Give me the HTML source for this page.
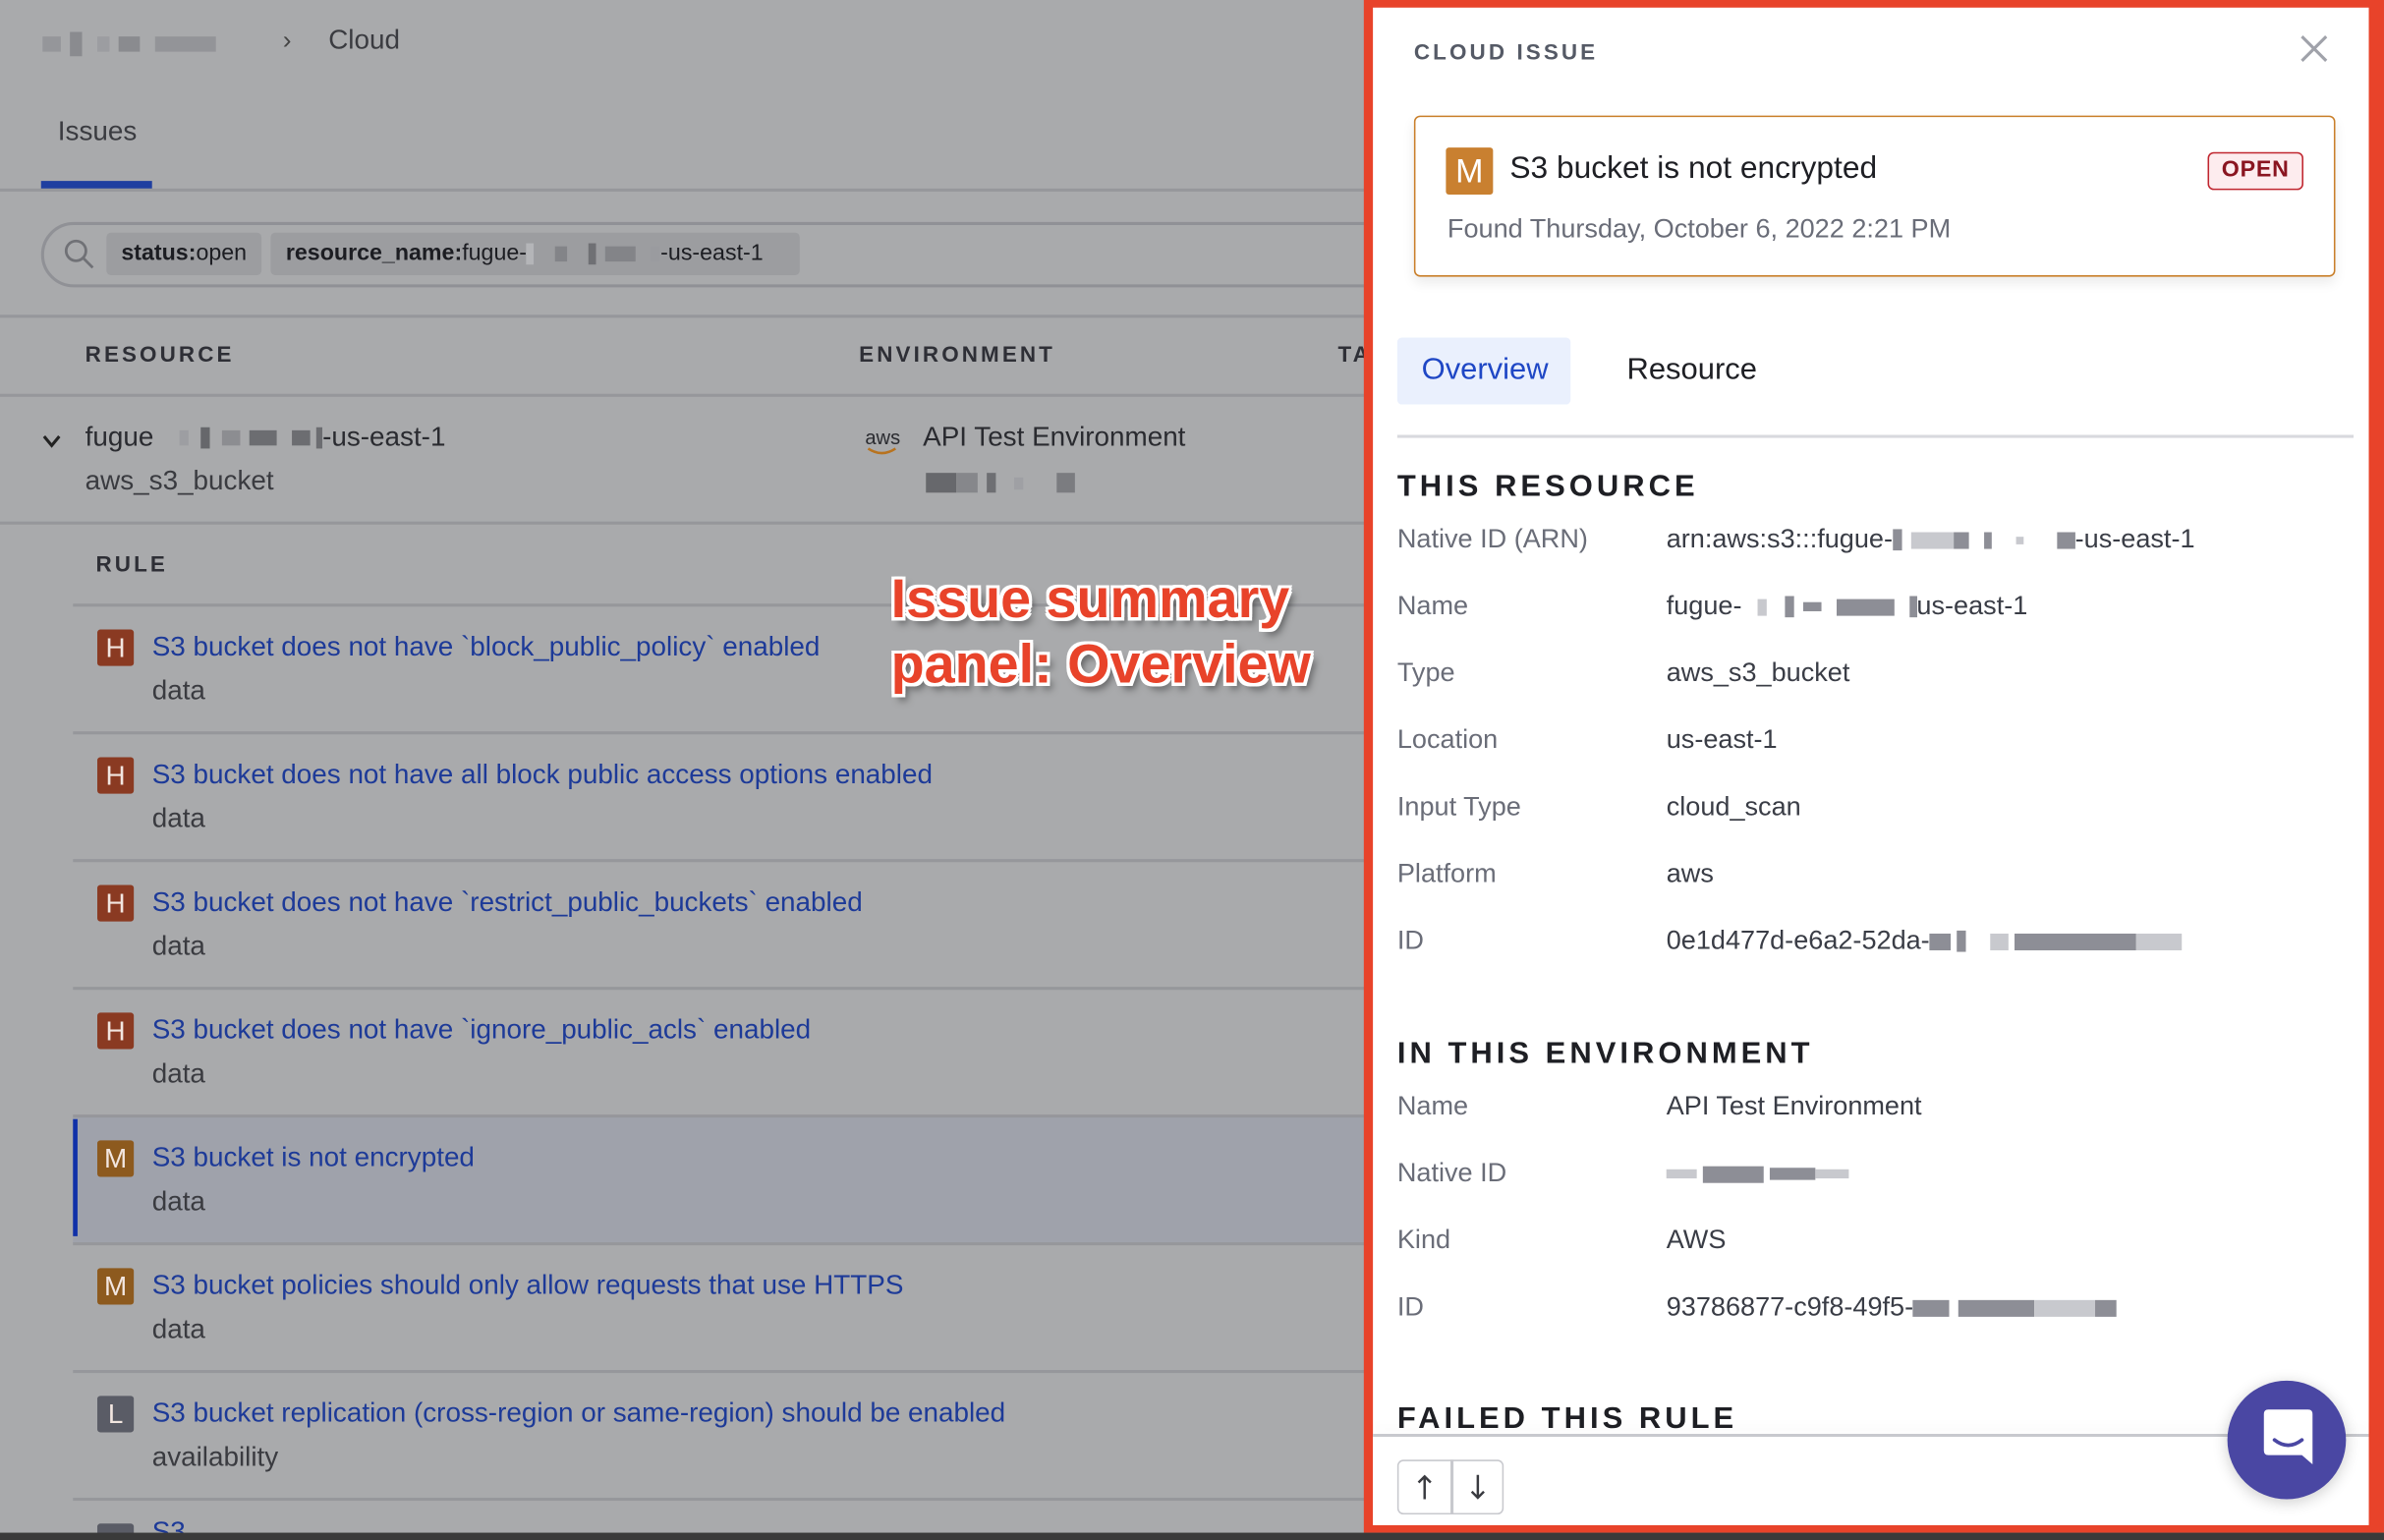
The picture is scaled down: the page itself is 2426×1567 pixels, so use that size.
<!DOCTYPE html>
<html><head><meta charset="utf-8">
<style>
html,body{margin:0;padding:0;width:2426px;height:1566px;overflow:hidden;background:#3a3a3a;}
#w{position:absolute;left:0;top:0;width:1568px;height:1013px;transform:scale(1.54719);transform-origin:0 0;font-family:"Liberation Sans",sans-serif;overflow:hidden;background:#a9aaac;}
.a{position:absolute;white-space:nowrap;}
.hl{position:absolute;height:2px;background:#96979b;}
.b{display:inline-block;background:#8e8f93;height:10px;vertical-align:middle;}
.badge{position:absolute;width:24px;height:24px;color:#f2e6e0;font-size:18px;text-align:center;line-height:24px;border-radius:2px;}
.rt{position:absolute;left:100px;font-size:18px;color:#1d3a98;}
.rd{position:absolute;left:100px;font-size:18px;color:#3a3b40;}
.lab{position:absolute;left:919px;font-size:17.5px;color:#6a6d78;}
.val{position:absolute;left:1096px;font-size:17.5px;color:#3a3d46;}
.sec{position:absolute;left:919px;font-size:20px;font-weight:bold;letter-spacing:2.6px;color:#1e1f24;}
.g{display:inline-block;height:11px;background:#c8c9ce;vertical-align:middle;}
.gd{display:inline-block;height:11px;background:#8d8e96;vertical-align:middle;}
</style></head><body><div id="w">
<div class="a" style="left:28px;top:20px;"><span class="b" style="width:12px;background:#95969a"></span><span class="b" style="width:8px;height:16px;margin-left:6px;background:#8a8b8f"></span><span class="b" style="width:8px;margin-left:10px;background:#9c9da1"></span><span class="b" style="width:14px;margin-left:6px;background:#8a8b8f"></span><span class="b" style="width:40px;margin-left:10px;background:#939498"></span></div>
<div class="a" style="left:186px;top:17px;font-size:17px;color:#444">›</div>
<div class="a" style="left:216px;top:16px;font-size:18px;color:#3a3b40">Cloud</div>
<div class="a" style="left:38px;top:76px;font-size:18px;color:#3a3b40">Issues</div>
<div class="a" style="left:27px;top:119px;width:73px;height:5px;background:#1f3fa0"></div>
<div class="hl" style="left:0;top:124px;width:900px"></div>
<div class="a" style="left:27px;top:146px;width:900px;height:39px;border:2px solid #909196;border-radius:22px;"></div>
<svg class="a" style="left:41px;top:156px" width="22" height="22" viewBox="0 0 22 22"><circle cx="9" cy="9" r="6.5" fill="none" stroke="#707176" stroke-width="1.8"/><line x1="14" y1="14" x2="20" y2="20" stroke="#707176" stroke-width="1.8"/></svg>
<div class="a" style="left:70px;top:153px;width:102px;height:28px;background:#9c9da0;border-radius:3px;font-size:15px;line-height:28px;text-align:center;color:#1c1d22"><b>status:</b>open</div>
<div class="a" style="left:178px;top:153px;width:348px;height:28px;background:#9c9da0;border-radius:3px;font-size:15px;line-height:28px;color:#1c1d22;padding-left:10px;box-sizing:border-box"><b>resource_name:</b>fugue-<span class="b" style="width:5px;height:14px;background:#b4b5b8"></span><span class="b" style="width:8px;margin-left:14px;background:#838488"></span><span class="b" style="width:5px;height:14px;margin-left:14px;background:#6f7074"></span><span class="b" style="width:20px;margin-left:6px;background:#838488"></span><span class="b" style="width:6px;margin-left:10px;background:#9a9b9f"></span>-us-east-1</div>
<div class="hl" style="left:0;top:207px;width:900px"></div>
<div class="a" style="left:56px;top:226px;font-size:14.5px;font-weight:bold;letter-spacing:2px;color:#2e2f36">RESOURCE</div>
<div class="a" style="left:565px;top:226px;font-size:14.5px;font-weight:bold;letter-spacing:2px;color:#2e2f36">ENVIRONMENT</div>
<div class="a" style="left:880px;top:226px;font-size:14.5px;font-weight:bold;letter-spacing:2px;color:#2e2f36">TA</div>
<div class="hl" style="left:0;top:259px;width:900px"></div>
<svg class="a" style="left:27px;top:284px" width="14" height="12" viewBox="0 0 14 12"><path d="M2 3 L7 9 L12 3" fill="none" stroke="#222" stroke-width="2"/></svg>
<div class="a" style="left:56px;top:277px;font-size:18px;color:#2a2b30">fugue <span class="b" style="width:6px;margin-left:12px;background:#9d9ea2"></span><span class="b" style="width:6px;height:14px;margin-left:8px;background:#66676b"></span><span class="b" style="width:12px;margin-left:8px;background:#8c8d91"></span><span class="b" style="width:18px;margin-left:6px;background:#6c6d71"></span><span class="b" style="width:12px;margin-left:10px;background:#6c6d71"></span><span class="b" style="width:4px;height:14px;margin-left:4px;background:#6c6d71"></span>-us-east-1</div>
<div class="a" style="left:56px;top:306px;font-size:18px;color:#3a3b40">aws_s3_bucket</div>
<div class="a" style="left:569px;top:280px;font-size:13px;color:#2a2b30">aws</div>
<svg class="a" style="left:569px;top:293px" width="24" height="8"><path d="M2 2 Q11 8 20 2" fill="none" stroke="#b8731f" stroke-width="1.6"/></svg>
<div class="a" style="left:607px;top:277px;font-size:18px;color:#2a2b30">API Test Environment</div>
<div class="a" style="left:609px;top:309px;"><span class="b" style="width:20px;height:13px;background:#67686c"></span><span class="b" style="width:14px;height:13px;background:#86878b"></span><span class="b" style="width:6px;height:13px;margin-left:6px;background:#6e6f73"></span><span class="b" style="width:6px;height:8px;margin-left:12px;background:#9fa0a4"></span><span class="b" style="width:12px;height:13px;margin-left:22px;background:#7b7c80"></span></div>
<div class="hl" style="left:0;top:343px;width:900px"></div>
<div class="a" style="left:63px;top:364px;font-size:14.5px;font-weight:bold;letter-spacing:2px;color:#2e2f36">RULE</div>
<div class="hl" style="left:48px;top:397px;width:852px"></div>
<div class="a" style="left:48px;top:734px;width:852px;height:84px;background:#9fa2ab"></div>
<div class="a" style="left:48px;top:736px;width:3px;height:77px;background:#1030a8"></div>
<div class="badge" style="left:64px;top:414px;background:#8a3a22">H</div><div class="rt" style="top:415px">S3 bucket does not have `block_public_policy` enabled</div><div class="rd" style="top:444px">data</div><div class="hl" style="left:48px;top:481px;width:852px"></div>
<div class="badge" style="left:64px;top:498px;background:#8a3a22">H</div><div class="rt" style="top:499px">S3 bucket does not have all block public access options enabled</div><div class="rd" style="top:528px">data</div><div class="hl" style="left:48px;top:565px;width:852px"></div>
<div class="badge" style="left:64px;top:582px;background:#8a3a22">H</div><div class="rt" style="top:583px">S3 bucket does not have `restrict_public_buckets` enabled</div><div class="rd" style="top:612px">data</div><div class="hl" style="left:48px;top:649px;width:852px"></div>
<div class="badge" style="left:64px;top:666px;background:#8a3a22">H</div><div class="rt" style="top:667px">S3 bucket does not have `ignore_public_acls` enabled</div><div class="rd" style="top:696px">data</div><div class="hl" style="left:48px;top:733px;width:852px"></div>
<div class="badge" style="left:64px;top:750px;background:#8d5a1e">M</div><div class="rt" style="top:751px">S3 bucket is not encrypted</div><div class="rd" style="top:780px">data</div><div class="hl" style="left:48px;top:817px;width:852px"></div>
<div class="badge" style="left:64px;top:834px;background:#8d5a1e">M</div><div class="rt" style="top:835px">S3 bucket policies should only allow requests that use HTTPS</div><div class="rd" style="top:864px">data</div><div class="hl" style="left:48px;top:901px;width:852px"></div>
<div class="badge" style="left:64px;top:918px;background:#5a5c66">L</div><div class="rt" style="top:919px">S3 bucket replication (cross-region or same-region) should be enabled</div><div class="rd" style="top:948px">availability</div><div class="hl" style="left:48px;top:985px;width:852px"></div>
<div class="badge" style="left:64px;top:1002px;background:#5a5c66"></div><div class="rt" style="top:997px">S3</div>
<div class="a" style="left:586px;top:372px;font-size:36px;font-weight:bold;line-height:43px;color:#e8432a;letter-spacing:0px;text-shadow:-2px -2px 0 #fff,2px -2px 0 #fff,-2px 2px 0 #fff,2px 2px 0 #fff,0 2px 0 #fff,0 -2px 0 #fff,2px 0 0 #fff,-2px 0 0 #fff,3px 4px 5px rgba(0,0,0,.5)">Issue summary<br>panel: Overview</div>
<div class="a" style="left:897px;top:0;width:671px;height:1008px;background:#e8432a"></div>
<div class="a" style="left:903px;top:5px;width:655px;height:998px;background:#fff;overflow:hidden"></div>
<div class="a" style="left:930px;top:27px;font-size:14.5px;font-weight:bold;letter-spacing:2px;color:#555a66">CLOUD ISSUE</div>
<svg class="a" style="left:1512px;top:22px" width="20" height="20"><path d="M2 2 L18 18 M18 2 L2 18" stroke="#a0a2aa" stroke-width="2"/></svg>
<div class="a" style="left:930px;top:76px;width:606px;height:106px;border:1.5px solid #c97f2a;border-radius:4px;box-shadow:0 4px 8px rgba(0,0,0,.08);box-sizing:border-box"></div>
<div class="badge" style="left:951px;top:97px;width:31px;height:31px;line-height:31px;font-size:22px;background:#c98030;color:#fff">M</div>
<div class="a" style="left:993px;top:99px;font-size:20.5px;color:#1e1f24">S3 bucket is not encrypted</div>
<div class="a" style="left:1452px;top:100px;width:63px;height:25px;border:1.5px solid #c0262f;border-radius:4px;background:#fdecee;box-sizing:border-box;font-size:15px;font-weight:bold;color:#8a1520;text-align:center;line-height:22px;letter-spacing:0.5px">OPEN</div>
<div class="a" style="left:952px;top:140px;font-size:17.5px;color:#6a6d78">Found Thursday, October 6, 2022 2:21 PM</div>
<div class="a" style="left:919px;top:222px;width:114px;height:44px;background:#eaf0fd;border-radius:3px"></div>
<div class="a" style="left:935px;top:232px;font-size:20px;color:#1f47c5">Overview</div>
<div class="a" style="left:1070px;top:232px;font-size:20px;color:#1e1f24">Resource</div>
<div class="a" style="left:919px;top:286px;width:629px;height:2px;background:#d8d9de"></div>
<div class="sec" style="top:309px">THIS RESOURCE</div>
<div class="lab" style="top:344px">Native ID (ARN)</div><div class="val" style="top:344px">arn:aws:s3:::fugue-<span class="gd" style="width:6px;height:14px"></span><span class="g" style="width:28px;margin-left:6px"></span><span class="gd" style="width:10px"></span><span class="gd" style="width:5px;margin-left:10px"></span><span class="g" style="width:5px;height:5px;margin-left:16px"></span><span class="gd" style="width:12px;margin-left:22px"></span>-us-east-1</div>
<div class="lab" style="top:388px">Name</div><div class="val" style="top:388px">fugue-<span class="g" style="width:6px;margin-left:10px"></span><span class="gd" style="width:6px;height:14px;margin-left:12px"></span><span class="gd" style="width:12px;height:6px;margin-left:6px"></span><span class="gd" style="width:38px;margin-left:10px"></span><span class="gd" style="width:5px;height:14px;margin-left:10px"></span>us-east-1</div>
<div class="lab" style="top:432px">Type</div><div class="val" style="top:432px">aws_s3_bucket</div>
<div class="lab" style="top:476px">Location</div><div class="val" style="top:476px">us-east-1</div>
<div class="lab" style="top:520px">Input Type</div><div class="val" style="top:520px">cloud_scan</div>
<div class="lab" style="top:564px">Platform</div><div class="val" style="top:564px">aws</div>
<div class="lab" style="top:608px">ID</div><div class="val" style="top:608px">0e1d477d-e6a2-52da-<span class="gd" style="width:14px"></span><span class="gd" style="width:6px;height:14px;margin-left:4px"></span><span class="g" style="width:12px;margin-left:16px"></span><span class="gd" style="width:80px;margin-left:4px"></span><span class="g" style="width:30px"></span></div>
<div class="sec" style="top:682px">IN THIS ENVIRONMENT</div>
<div class="lab" style="top:717px">Name</div><div class="val" style="top:717px">API Test Environment</div>
<div class="lab" style="top:761px">Native ID</div><div class="val" style="top:761px"><span class="g" style="width:20px;height:6px"></span><span class="gd" style="width:40px;margin-left:4px"></span><span class="gd" style="width:30px;height:8px;margin-left:4px"></span><span class="g" style="width:22px;height:6px"></span></div>
<div class="lab" style="top:805px">Kind</div><div class="val" style="top:805px">AWS</div>
<div class="lab" style="top:849px">ID</div><div class="val" style="top:849px">93786877-c9f8-49f5-<span class="gd" style="width:24px"></span><span class="gd" style="width:50px;margin-left:6px"></span><span class="g" style="width:40px"></span><span class="gd" style="width:14px"></span></div>
<div class="sec" style="top:922px">FAILED THIS RULE</div>
<div class="a" style="left:903px;top:943px;width:655px;height:2px;background:#c8c9ce;box-shadow:0 -4px 8px rgba(0,0,0,.06)"></div>
<div class="a" style="left:903px;top:945px;width:655px;height:58px;background:#fff"></div>
<div class="a" style="left:919px;top:960px;width:70px;height:36px;border:1.5px solid #c8c9ce;border-radius:4px;box-sizing:border-box"></div>
<div class="a" style="left:954px;top:960px;width:1.5px;height:36px;background:#c8c9ce"></div>
<svg class="a" style="left:929px;top:968px" width="16" height="20"><path d="M8 18 V3 M4 7 L8 3 L12 7" fill="none" stroke="#3a3b40" stroke-width="1.6"/></svg>
<svg class="a" style="left:964px;top:968px" width="16" height="20"><path d="M8 2 V17 M4 13 L8 17 L12 13" fill="none" stroke="#3a3b40" stroke-width="1.6"/></svg>
<div class="a" style="left:1465px;top:908px;width:78px;height:78px;border-radius:50%;background:#4a47a3;box-shadow:0 2px 10px rgba(0,0,0,.2)"></div>
<svg class="a" style="left:1485px;top:926px" width="40" height="40" viewBox="0 0 40 40"><path d="M4 4 Q4 1 7 1 H33 Q36 1 36 4 V37 L29 31 H7 Q4 31 4 28 Z" fill="#fff"/><path d="M11 21 Q20 28 29 21" fill="none" stroke="#4a47a3" stroke-width="2.4" stroke-linecap="round"/></svg>
<div class="a" style="left:0;top:1008px;width:1568px;height:5px;background:#3a3a3a"></div>
</div></body></html>
